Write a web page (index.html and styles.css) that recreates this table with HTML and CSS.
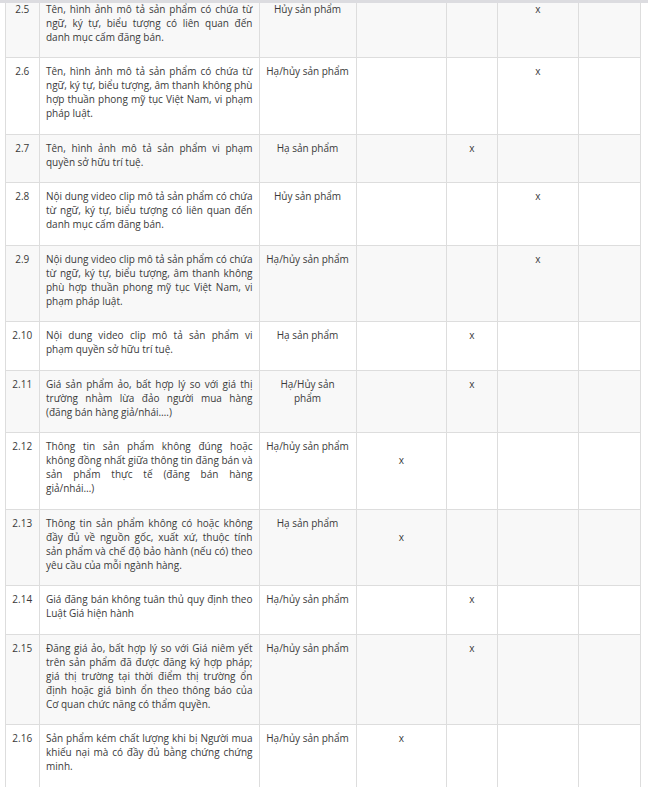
FILE: index.html
```html
<!DOCTYPE html>
<html lang="vi">
<head>
<meta charset="utf-8">
<title>Quy định</title>
<link rel="stylesheet" href="styles.css">
</head>
<body>
<div class="topbar"></div>
<div class="viewport">
<table class="rules">
<colgroup>
<col class="c-no"><col class="c-desc"><col class="c-act"><col class="c-a"><col class="c-b"><col class="c-c"><col class="c-d">
</colgroup>
<tbody>
<tr><td class="no"><p>2.5</p></td><td class="desc"><p>Tên, hình ảnh mô tả sản phẩm có chứa từ ngữ, ký tự, biểu tượng có liên quan đến danh mục cấm đăng bán.</p></td><td class="act"><p>Hủy sản phẩm</p></td><td></td><td></td><td class="mark"><p>x</p></td><td></td></tr>
<tr><td class="no"><p>2.6</p></td><td class="desc"><p>Tên, hình ảnh mô tả sản phẩm có chứa từ ngữ, ký tự, biểu tượng, âm thanh không phù hợp thuần phong mỹ tục Việt Nam, vi phạm pháp luật.</p></td><td class="act"><p>Hạ/hủy sản phẩm</p></td><td></td><td></td><td class="mark"><p>x</p></td><td></td></tr>
<tr><td class="no"><p>2.7</p></td><td class="desc"><p>Tên, hình ảnh mô tả sản phẩm vi phạm quyền sở hữu trí tuệ.</p></td><td class="act"><p>Hạ sản phẩm</p></td><td></td><td class="mark"><p>x</p></td><td></td><td></td></tr>
<tr><td class="no"><p>2.8</p></td><td class="desc"><p>Nội dung video clip mô tả sản phẩm có chứa từ ngữ, ký tự, biểu tượng có liên quan đến danh mục cấm đăng bán.</p></td><td class="act"><p>Hủy sản phẩm</p></td><td></td><td></td><td class="mark"><p>x</p></td><td></td></tr>
<tr><td class="no"><p>2.9</p></td><td class="desc"><p>Nội dung video clip mô tả sản phẩm có chứa từ ngữ, ký tự, biểu tượng, âm thanh không phù hợp thuần phong mỹ tục Việt Nam, vi phạm pháp luật.</p></td><td class="act"><p>Hạ/hủy sản phẩm</p></td><td></td><td></td><td class="mark"><p>x</p></td><td></td></tr>
<tr><td class="no"><p>2.10</p></td><td class="desc"><p>Nội dung video clip mô tả sản phẩm vi phạm quyền sở hữu trí tuệ.</p></td><td class="act"><p>Hạ sản phẩm</p></td><td></td><td class="mark"><p>x</p></td><td></td><td></td></tr>
<tr><td class="no"><p>2.11</p></td><td class="desc"><p>Giá sản phẩm ảo, bất hợp lý so với giá thị trường nhằm lừa đảo người mua hàng (đăng bán hàng giả/nhái….)</p></td><td class="act"><p>Hạ/Hủy sản phẩm</p></td><td></td><td class="mark"><p>x</p></td><td></td><td></td></tr>
<tr><td class="no"><p>2.12</p></td><td class="desc"><p>Thông tin sản phẩm không đúng hoặc không đồng nhất giữa thông tin đăng bán và sản phẩm thực tế (đăng bán hàng giả/nhái…)</p></td><td class="act"><p>Hạ/hủy sản phẩm</p></td><td class="mark"><p><br>x</p></td><td></td><td></td><td></td></tr>
<tr><td class="no"><p>2.13</p></td><td class="desc"><p>Thông tin sản phẩm không có hoặc không đầy đủ về nguồn gốc, xuất xứ, thuộc tính sản phẩm và chế độ bảo hành (nếu có) theo yêu cầu của mỗi ngành hàng.</p></td><td class="act"><p>Hạ sản phẩm</p></td><td class="mark"><p><br>x</p></td><td></td><td></td><td></td></tr>
<tr><td class="no"><p>2.14</p></td><td class="desc"><p>Giá đăng bán không tuân thủ quy định theo Luật Giá hiện hành</p></td><td class="act"><p>Hạ/hủy sản phẩm</p></td><td></td><td class="mark"><p>x</p></td><td></td><td></td></tr>
<tr><td class="no"><p>2.15</p></td><td class="desc"><p>Đăng giá ảo, bất hợp lý so với Giá niêm yết trên sản phẩm đã được đăng ký hợp pháp; giá thị trường tại thời điểm thị trường ổn định hoặc giá bình ổn theo thông báo của Cơ quan chức năng có thẩm quyền.</p></td><td class="act"><p>Hạ/hủy sản phẩm</p></td><td></td><td class="mark"><p>x</p></td><td></td><td></td></tr>
<tr class="last"><td class="no"><p>2.16</p></td><td class="desc"><p>Sản phẩm kém chất lượng khi bị Người mua khiếu nại mà có đầy đủ bằng chứng chứng minh.</p></td><td class="act"><p>Hạ/hủy sản phẩm</p></td><td class="mark"><p>x</p></td><td></td><td></td><td></td></tr>
</tbody>
</table>
</div>
</body>
</html>
```
FILE: styles.css
```css
html, body {
  margin: 0;
  padding: 0;
  background: #ffffff;
}
body {
  width: 648px;
  font-family: "Open Sans", "Liberation Sans", sans-serif;
  font-size: 10px;
  line-height: 14px;
  color: #3a3a3a;
}
.topbar {
  height: 3px;
  background: #dcdce0;
}
.viewport {
  overflow: hidden;
  border-bottom: 1px solid #dddddd;
}
.rules {
  margin: -8.5px 0 0 5px;
  width: 636px;
  border-collapse: collapse;
  table-layout: fixed;
}
.c-no { width: 34px; }
.c-desc { width: 220px; }
.c-act { width: 97px; }
.c-a { width: 90px; }
.c-b { width: 51px; }
.c-c { width: 81px; }
.c-d { width: 62px; }
.rules td {
  border: 1px solid #dddddd;
  padding: 6px 6.5px 6px 6px;
  vertical-align: top;
}
.rules td.act {
  padding-right: 7px;
}
.rules tr:nth-child(odd) td {
  background: #f8f8f8;
}
.rules tr.last td {
  border-bottom: 0;
}
.rules p {
  margin: 0 0 7.5px;
}
.no { text-align: center; }
.desc { text-align: justify; }
.act { text-align: center; }
.mark { text-align: center; }
```
